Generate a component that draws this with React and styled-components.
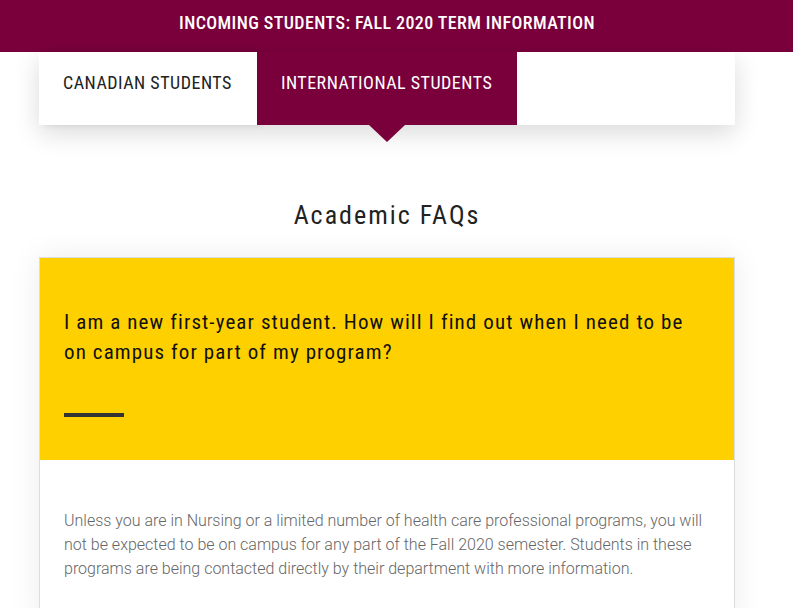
import React, { useState } from 'react'
import styled, { createGlobalStyle } from 'styled-components'

const GlobalStyle = createGlobalStyle`
*{
  margin:0;
  padding:0;
  box-sizing:border-box;
}
body{
  background:#fff;
  font-family: Roboto, "Liberation Sans", sans-serif;
}
`

const maroon = '#7a003c'

const Banner = styled.div`
height:52px;
background:${maroon};
display:flex;
justify-content:center;
align-items:center;
padding-right:19px;
`
const BannerText = styled.h2`
color:#fff;
font-family: Roboto, sans-serif;
font-stretch:80%;
font-size:18px;
font-weight:500;
letter-spacing:0.42px;
text-transform:uppercase;
padding-bottom:8px;
`
const Inner = styled.div`
width:774px;
padding:0 39px;
`
const TabBar = styled.div`
display:flex;
height:73px;
background:#fff;
box-shadow:0 8px 26px rgba(0,0,0,0.15);
`
const Tab = styled.button`
position:relative;
border:none;
cursor:pointer;
padding:0 25px 12px 24px;
font-family: Roboto, sans-serif;
font-stretch:82%;
font-size:18px;
font-weight:400;
letter-spacing:0.5px;
text-transform:uppercase;
background:${p => (p.active ? maroon : '#fff')};
color:${p => (p.active ? '#fff' : '#222')};
box-shadow:${p => (p.active ? 'none' : '5px 0 6px rgba(0,0,0,0.09)')};
&::after{
  content:'';
  display:${p => (p.active ? 'block' : 'none')};
  position:absolute;
  left:50%;
  bottom:-17px;
  margin-left:-18px;
  border-left:18px solid transparent;
  border-right:18px solid transparent;
  border-top:17px solid ${maroon};
}
`
const Title = styled.h1`
text-align:center;
font-family: Roboto, sans-serif;
font-stretch:82%;
font-weight:400;
font-size:26px;
letter-spacing:2px;
color:#222;
margin:75px 0 27px;
`
const Card = styled.div`
border:1px solid #ddd;
box-shadow:0 0 30px rgba(0,0,0,0.08);
background:#fff;
`
const Question = styled.div`
background:#ffd000;
padding:49px 24px 43px;
`
const QText = styled.h3`
font-family: Roboto, sans-serif;
font-stretch:86%;
font-weight:400;
font-size:21px;
letter-spacing:1.1px;
line-height:30px;
color:#111;
`
const Bar = styled.div`
width:60px;
height:4px;
background:#333;
margin-top:46px;
`
const Answer = styled.div`
padding:49px 24px 40px;
`
const AText = styled.p`
font-family: Roboto, sans-serif;
font-weight:300;
font-size:16px;
line-height:24px;
color:#666;
`

export default function App() {
  const [tab, setTab] = useState('intl')
  return (
    <>
      <GlobalStyle />
      <Banner>
        <BannerText>Incoming Students: Fall 2020 Term Information</BannerText>
      </Banner>
      <Inner>
        <TabBar>
          <Tab active={tab === 'cdn'} onClick={() => setTab('cdn')}>Canadian Students</Tab>
          <Tab active={tab === 'intl'} onClick={() => setTab('intl')}>International Students</Tab>
        </TabBar>
        <Title>Academic FAQs</Title>
        <Card>
          <Question>
            <QText>I am a new first-year student. How will I find out when I need to be on campus for part of my program?</QText>
            <Bar />
          </Question>
          <Answer>
            <AText>
              Unless you are in Nursing or a limited number of health care professional programs, you will not be expected to be on campus for any part of the Fall 2020 semester. Students in these programs are being contacted directly by their department with more information.
            </AText>
          </Answer>
        </Card>
      </Inner>
    </>
  )
}
